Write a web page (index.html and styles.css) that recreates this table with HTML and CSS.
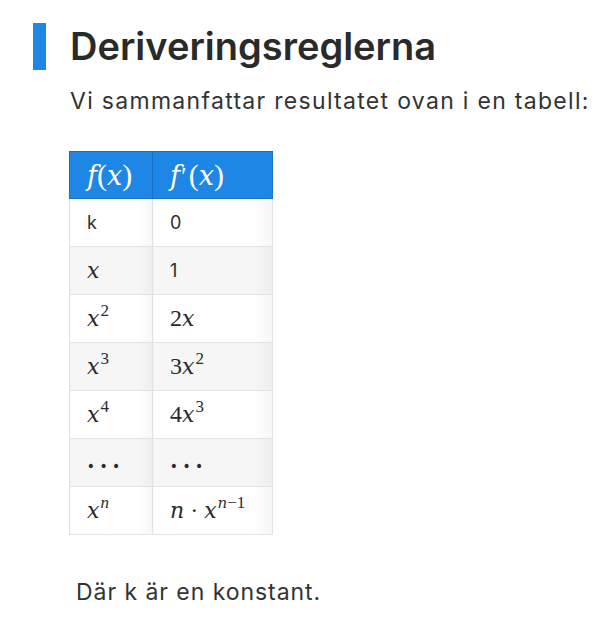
FILE: index.html
```html
<!DOCTYPE html>
<html lang="sv">
<head>
<meta charset="utf-8">
<title>Deriveringsreglerna</title>
<link rel="stylesheet" href="styles.css">
</head>
<body>
<section class="article">
  <h2 class="title">Deriveringsreglerna</h2>
  <p class="lead">Vi sammanfattar resultatet ovan i en tabell:</p>
  <div class="table-wrap">
    <table class="rules">
      <thead>
        <tr><th><span class="m">f</span><span class="r">(</span><span class="m">x</span><span class="r">)</span></th><th><span class="m">f</span><span class="r prime">′</span><span class="r">(</span><span class="m">x</span><span class="r">)</span></th></tr>
      </thead>
      <tbody>
        <tr><td>k</td><td>0</td></tr>
        <tr><td><span class="m">x</span></td><td>1</td></tr>
        <tr><td><span class="m">x</span><sup>2</sup></td><td><span class="r">2</span><span class="m">x</span></td></tr>
        <tr><td><span class="m">x</span><sup>3</sup></td><td><span class="r">3</span><span class="m">x</span><sup>2</sup></td></tr>
        <tr><td><span class="m">x</span><sup>4</sup></td><td><span class="r">4</span><span class="m">x</span><sup>3</sup></td></tr>
        <tr><td><span class="dots">···</span></td><td><span class="dots">···</span></td></tr>
        <tr><td><span class="m">x</span><sup class="m">n</sup></td><td><span class="m">n</span><span class="r op">·</span><span class="m">x</span><sup><span class="m">n</span>−1</sup></td></tr>
      </tbody>
    </table>
  </div>
  <p class="note">Där k är en konstant.</p>
</section>
</body>
</html>
```

FILE: styles.css
```css
html, body {
  margin: 0;
  padding: 0;
  background: #ffffff;
}

body {
  font-family: "Inter", "Open Sans", sans-serif;
  color: #2b2b2b;
}

.article {
  padding: 23px 0 0 33px;
}

.title {
  margin: 0;
  border-left: 13px solid #1e86e4;
  padding-left: 24px;
  height: 47px;
  line-height: 47px;
  font-size: 38px;
  font-weight: 600;
  color: #2a2a2a;
}

.lead {
  margin: 15px 0 0 37px;
  font-size: 23px;
  line-height: 32px;
  letter-spacing: 1.3px;
  color: #333;
}

.table-wrap {
  margin: 34px 0 0 36px;
  display: inline-block;
}

.rules {
  border-collapse: collapse;
  border: 1px solid #e3e3e3;
}

.rules th,
.rules td {
  text-align: left;
  padding: 0 0 0 17px;
  height: 47px;
  font-weight: 400;
  vertical-align: middle;
  border: 1px solid #e3e3e3;
  white-space: nowrap;
}

.rules th:first-child,
.rules td:first-child {
  width: 65px;
}

.rules th:last-child,
.rules td:last-child {
  width: 102px;
}

.rules thead th {
  background: #1e86e4;
  color: #ffffff;
  border-color: #1a70c2;
  height: 46px;
}

.rules tbody td {
  font-size: 18px;
  color: #2b2b2b;
  background: linear-gradient(to right, rgba(0,0,0,0) 85%, rgba(0,0,0,0.035) 100%);
}

.rules tbody tr:nth-child(even) td {
  background-color: #f6f6f6;
}

.m {
  font-family: "DejaVu Serif", "Liberation Serif", serif;
  font-style: italic;
  font-size: 22px;
}

.rules thead .m {
  font-size: 27px;
}

.r {
  font-family: "Liberation Serif", "DejaVu Serif", serif;
  font-size: 24px;
}

.rules thead .r {
  font-size: 30px;
}

.rules thead .prime {
  font-size: 26px;
  margin: 0 2px 0 1px;
}

.rules sup {
  font-family: "Liberation Serif", serif;
  font-size: 17px;
  vertical-align: 10px;
  line-height: 0;
  margin-left: 1px;
}

.rules sup .m {
  font-size: 15px;
}

.op {
  margin: 0 6px;
}

.dots {
  font-family: "DejaVu Serif", serif;
  font-size: 22px;
  letter-spacing: 5px;
  font-weight: 700;
  position: relative;
  top: 3px;
  color: #2b2b2b;
}

.note {
  margin: 37px 0 0 43px;
  font-size: 23px;
  line-height: 32px;
  letter-spacing: 0.95px;
  color: #333;
}
```
